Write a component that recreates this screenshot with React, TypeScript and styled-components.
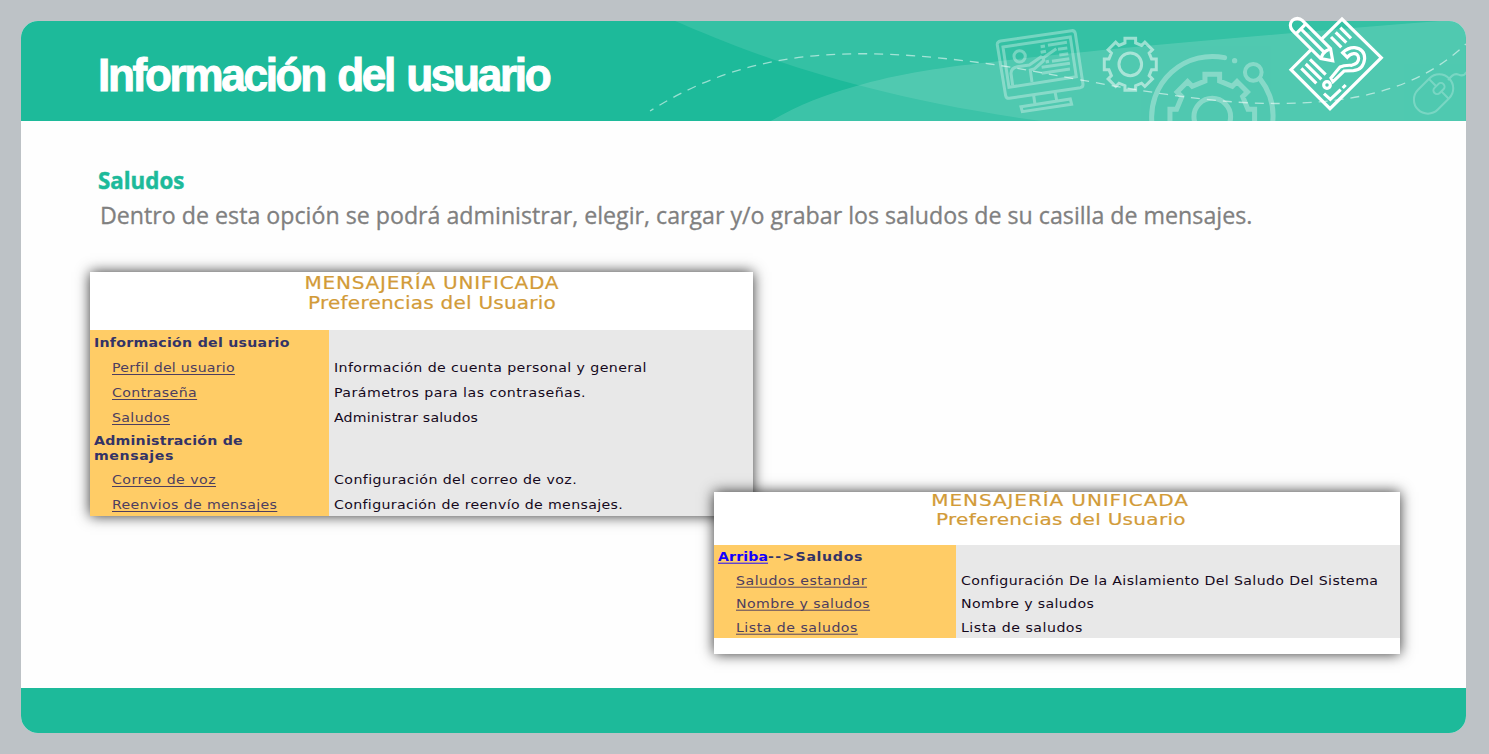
import React from "react";
import styled, { createGlobalStyle, css } from "styled-components";

const GlobalStyle = createGlobalStyle`
  html, body { margin: 0; background: #bdc2c6; }
  * { box-sizing: border-box; }
`;

const Page = styled.div`
  height: 754px;
  padding: 21px 23px 21px 21px;
  overflow: hidden;
  background: #bdc2c6;
`;

const Slide = styled.main`
  display: flex;
  flex-direction: column;
  width: 1445px;
  height: 711.5px;
  border-radius: 17px;
  background: #fefefe;
`;

const Header = styled.header`
  position: relative;
  flex: none;
  display: flex;
  align-items: center;
  height: 100.4px;
  padding: 7px 0 0 76.5px;
  border-radius: 17px 17px 0 0;
  background: #1dba9a;
`;

const HeaderArt = styled.svg`
  position: absolute;
  left: 0;
  top: 0;
  width: 1445px;
  height: 100.4px;
  border-radius: 17px 17px 0 0;
  overflow: hidden;
`;

const PaperIcon = styled.svg`
  position: absolute;
  left: 1249px;
  top: -16px;
  width: 219px;
  height: 125px;
  overflow: visible;
`;

const Title = styled.h1`
  position: relative;
  margin: 0;
  font: bold 46px/56px "Liberation Sans", sans-serif;
  letter-spacing: -2.45px;
  word-spacing: 2.5px;
  color: #fff;
  -webkit-text-stroke: 1px #fff;
  white-space: nowrap;
  transform: scaleX(0.96);
  transform-origin: left center;
`;

const Content = styled.section`
  flex: 1;
  display: flex;
  flex-direction: column;
  align-items: flex-start;
  padding-top: 41.6px;
`;

const Heading = styled.h2`
  margin: 0 0 0 77px;
  font: bold 24px/34px "Open Sans", sans-serif;
  color: #1dba9a;
  -webkit-text-stroke: 0.5px #1dba9a;
  transform: scaleX(0.93);
  transform-origin: left center;
`;

const Lead = styled.p`
  margin: 0 0 0 78.5px;
  font: 24px/35px "Open Sans", sans-serif;
  color: #808080;
  -webkit-text-stroke: 0.3px #808080;
  white-space: nowrap;
  transform: scaleX(0.9665);
  transform-origin: left center;
`;

const Card = styled.article<{ $second?: boolean }>`
  flex: none;
  position: relative;
  display: flex;
  flex-direction: column;
  background: #fff;
  font-family: "DejaVu Sans", Verdana, sans-serif;
  box-shadow: 0 0 13px rgba(0, 0, 0, 0.8);
  ${(p) =>
    p.$second
      ? css`
          align-self: flex-end;
          width: 686px;
          height: 162px;
          margin: -24px 66px 0 0;
        `
      : css`
          width: 663px;
          height: 244px;
          margin: 40px 0 0 69px;
        `}
`;

const CardHead = styled.div<{ $second?: boolean }>`
  display: flex;
  flex-direction: column;
  align-items: center;
  height: ${(p) => (p.$second ? 53 : 58)}px;
  padding: ${(p) => (p.$second ? "0 0 0 7px" : "1px 0 0 21px")};
  margin-top: ${(p) => (p.$second ? -1 : 0)}px;
  margin-bottom: ${(p) => (p.$second ? 1 : 0)}px;
  line-height: ${(p) => (p.$second ? 19 : 20)}px;
  font-size: 17px;
  color: #d29b38;
  -webkit-text-stroke: 0.2px #d29b38;
`;

const Scaled = styled.span<{ $spacing: number; $short?: boolean; $center?: boolean }>`
  display: block;
  width: max-content;
  white-space: nowrap;
  letter-spacing: ${(p) => p.$spacing}px;
  transform: scale(1.18, ${(p) => (p.$short ? 0.95 : 1)});
  transform-origin: ${(p) => (p.$center ? "center" : "left")} center;
`;

const Row = styled.div<{ $h: number; $side: number; $drop?: number }>`
  display: grid;
  grid-template-columns: ${(p) => p.$side}px 1fr;
  height: ${(p) => p.$h}px;
  font-size: 12px;
  & > * {
    padding-top: ${(p) => p.$drop ?? 1}px;
  }
`;

const Side = styled.div<{ $link?: boolean }>`
  display: flex;
  flex-direction: column;
  justify-content: center;
  padding-left: ${(p) => (p.$link ? 22 : 4)}px;
  line-height: 14.5px;
  background: #ffcc66;
  color: #333366;
  font-weight: ${(p) => (p.$link ? 400 : 700)};
`;

const Detail = styled.div`
  display: flex;
  align-items: center;
  padding-left: 5px;
  line-height: 14.5px;
  background: #e8e8e8;
  color: #15081c;
`;

const Link = styled.a<{ $blue?: boolean }>`
  color: ${(p) => (p.$blue ? "#1400ff" : "#4d3d5f")};
  text-decoration: underline;
  text-decoration-thickness: 1px;
  text-underline-offset: 2px;
  text-decoration-skip-ink: none;
`;

const Arrow = styled.span`
  letter-spacing: 1.1px;
`;

const Current = styled.span`
  letter-spacing: 0.55px;
`;

const Footer = styled.footer`
  flex: none;
  height: 44.5px;
  border-radius: 0 0 17px 17px;
  background: #1dba9a;
`;

type Label = [text: string, spacing: number];
type RowData = { h: number; drop?: number; heads?: Label[]; link?: Label; detail?: Label };

const preferences: RowData[] = [
  { h: 26, heads: [["Información del usuario", 0.22]] },
  { h: 25, drop: 0, link: ["Perfil del usuario", 0.21], detail: ["Información de cuenta personal y general", 0.35] },
  { h: 25, drop: 0, link: ["Contraseña", 0.32], detail: ["Parámetros para las contraseñas.", 0.385] },
  { h: 25, drop: 0, link: ["Saludos", 0.29], detail: ["Administrar saludos", 0.145] },
  { h: 36, drop: 0, heads: [["Administración de", 0.19], ["mensajes", 0.5]] },
  { h: 25, link: ["Correo de voz", 0.38], detail: ["Configuración del correo de voz.", 0.36] },
  { h: 24, drop: 2.5, link: ["Reenvios de mensajes", 0.3], detail: ["Configuración de reenvío de mensajes.", 0.285] },
];

const greetings: RowData[] = [
  { h: 24, drop: 3, link: ["Saludos estandar", 0.43], detail: ["Configuración De la Aislamiento Del Saludo Del Sistema", 0.31] },
  { h: 23, drop: 2, link: ["Nombre y saludos", 0.34], detail: ["Nombre y saludos", 0.29] },
  { h: 23, drop: 3, link: ["Lista de saludos", 0.41], detail: ["Lista de saludos", 0.41] },
];

function TableRow({ row, side, short }: { row: RowData; side: number; short?: boolean }) {
  return (
    <Row $h={row.h} $side={side} $drop={row.drop}>
      <Side $link={!!row.link}>
        {row.heads?.map(([text, spacing]) => (
          <Scaled key={text} $spacing={spacing} $short={short}>{text}</Scaled>
        ))}
        {row.link && (
          <Scaled $spacing={row.link[1]} $short={short}>
            <Link>{row.link[0]}</Link>
          </Scaled>
        )}
      </Side>
      <Detail>
        {row.detail && <Scaled $spacing={row.detail[1]} $short={short}>{row.detail[0]}</Scaled>}
      </Detail>
    </Row>
  );
}

// Outline of an eight-toothed gear centred on the origin.
function gearPath(half: number, root: number, tip: number) {
  const points: string[] = [];
  for (let i = 0; i < 8; i++) {
    const a = (i * Math.PI) / 4;
    for (const [x, y] of [[-half, -root], [-half, -tip], [half, -tip], [half, -root]]) {
      points.push(`${(x * Math.cos(a) - y * Math.sin(a)).toFixed(1)},${(x * Math.sin(a) + y * Math.cos(a)).toFixed(1)}`);
    }
  }
  return `M${points.join("L")}Z`;
}

function Art() {
  return (
    <HeaderArt viewBox="21 21 1445 100.4" fill="none" stroke="#fff">
      <g stroke="none" fill="#fff">
        <path fillOpacity="0.1" d="M675,21C740,49 853,96 1045,121.5H1466V21Z" />
        <path fillOpacity="0.14" d="M770,121.5C800,104 825,95 853,87C900,73 945,67 1000,61C1120,47 1290,33 1440,21H1466V121.5Z" />
      </g>
      <g transform="translate(980 10) scale(.3333)" strokeWidth="9" opacity="0.32">
        <path d="M62,93L275,62Q284,61 286,70L309,222Q310,231 301,233L88,265Q79,266 77,257L52,105Q51,95 62,93Z" />
        <path d="M69,111L271,81L289,200L87,232Z" />
        <circle cx="119" cy="139" r="17" />
        <path d="M98,226L93,190Q94,173 112,170L148,165L183,141Q194,144 190,153L164,176L151,180L156,216M186,146L229,116" />
        <path d="M182,110L195,108M204,106L261,97M182,127L198,124M234,118L262,114M238,135L265,131M197,156L207,154M216,154L268,146M185,172L270,160M185,190L270,177" />
        <path d="M161,256L165,283M225,245L230,270M123,290L271,267L275,283L127,305Z" />
      </g>
      <g transform="translate(980 10) scale(.3333) translate(451 163)" strokeWidth="9" opacity="0.5">
        <path d={gearPath(16, 64, 78)} />
        <circle r="34" />
      </g>
      <g transform="translate(1140 10) scale(.3333)" strokeWidth="15" opacity="0.31">
        <path d={gearPath(22, 107, 127)} transform="translate(217 320)" />
        <circle cx="217" cy="320" r="55" />
        <path strokeLinecap="round" d="M36,340A182,182 0 0 1 254,143M360,206A182,182 0 0 1 398,340" />
        <circle cx="340" cy="187" r="25" strokeWidth="12" />
        <circle cx="284" cy="152" r="8" fill="#fff" stroke="none" />
      </g>
      <g transform="translate(1270 5) scale(.3333)" strokeWidth="6" opacity="0.24">
        <g transform="translate(491 267) rotate(-45)">
          <rect x="-66" y="-42" width="132" height="84" rx="42" />
          <path d="M22,-42V-12M22,12V42" />
          <rect x="4" y="-11" width="38" height="22" rx="11" />
        </g>
        <path d="M535,226Q550,202 566,209T590,201" />
      </g>
      <path
        stroke="#fff"
        strokeOpacity="0.55"
        strokeWidth="1.3"
        strokeDasharray="9 7"
        strokeDashoffset="5"
        d="M650,111C750,48 850,45 990,64C1060,74 1180,103.5 1275,103.5C1350,103.5 1415,92 1466,44"
      />
    </HeaderArt>
  );
}

function Paper() {
  return (
    <PaperIcon viewBox="0 0 657 375" fill="none" stroke="#fff" strokeWidth="9.5">
      <path d="M124,133L63,194L180,311L334,158L216,42L154,103" />
      <g transform="translate(82 61) rotate(45)">
        <path d="M120,-21H0A21,21 0 0 0 0,21H120L150,0Z" strokeLinejoin="miter" />
        <path d="M15,-21V21M15,0H120M120,-21L113,0L120,21" />
      </g>
      <path d="M211,68L243,100M197,82L229,113M183,96L214,127M120,163L167,209M107,177L154,223M94,190L139,235" />
      <path d="M218,143Q235,127 254,128Q284,132 284,161Q280,195 250,197L222,198L189,230L183,219L210,186Q222,180 245,181Q266,176 266,160Q264,144 250,146Q240,147 232,157Z" />
      <circle cx="171" cy="240" r="10" />
      <path d="M162,266L181,283L212,254M218,249L227,240" />
    </PaperIcon>
  );
}

export default function App() {
  return (
    <Page>
      <GlobalStyle />
      <Slide>
        <Header>
          <Art />
          <Paper />
          <Title>Información del usuario</Title>
        </Header>
        <Content>
          <Heading>Saludos</Heading>
          <Lead>
            Dentro de esta opción se podrá administrar, elegir, cargar y/o grabar los saludos de su casilla de mensajes.
          </Lead>
          <Card>
            <CardHead>
              <Scaled $center $spacing={0.62}>MENSAJERÍA UNIFICADA</Scaled>
              <Scaled $center $spacing={0.17}>Preferencias del Usuario</Scaled>
            </CardHead>
            {preferences.map((row, i) => (
              <TableRow key={i} row={row} side={239} />
            ))}
          </Card>
          <Card $second>
            <CardHead $second>
              <Scaled $center $short $spacing={0.74}>MENSAJERÍA UNIFICADA</Scaled>
              <Scaled $center $short $spacing={0.24}>Preferencias del Usuario</Scaled>
            </CardHead>
            <Row $h={23} $side={242}>
              <Side>
                <Scaled $short $spacing={0.08}>
                  <Link $blue>Arriba</Link>
                  <Arrow>--&gt;</Arrow>
                  <Current>Saludos</Current>
                </Scaled>
              </Side>
              <Detail />
            </Row>
            {greetings.map((row, i) => (
              <TableRow key={i} row={row} side={242} short />
            ))}
          </Card>
        </Content>
        <Footer />
      </Slide>
    </Page>
  );
}
